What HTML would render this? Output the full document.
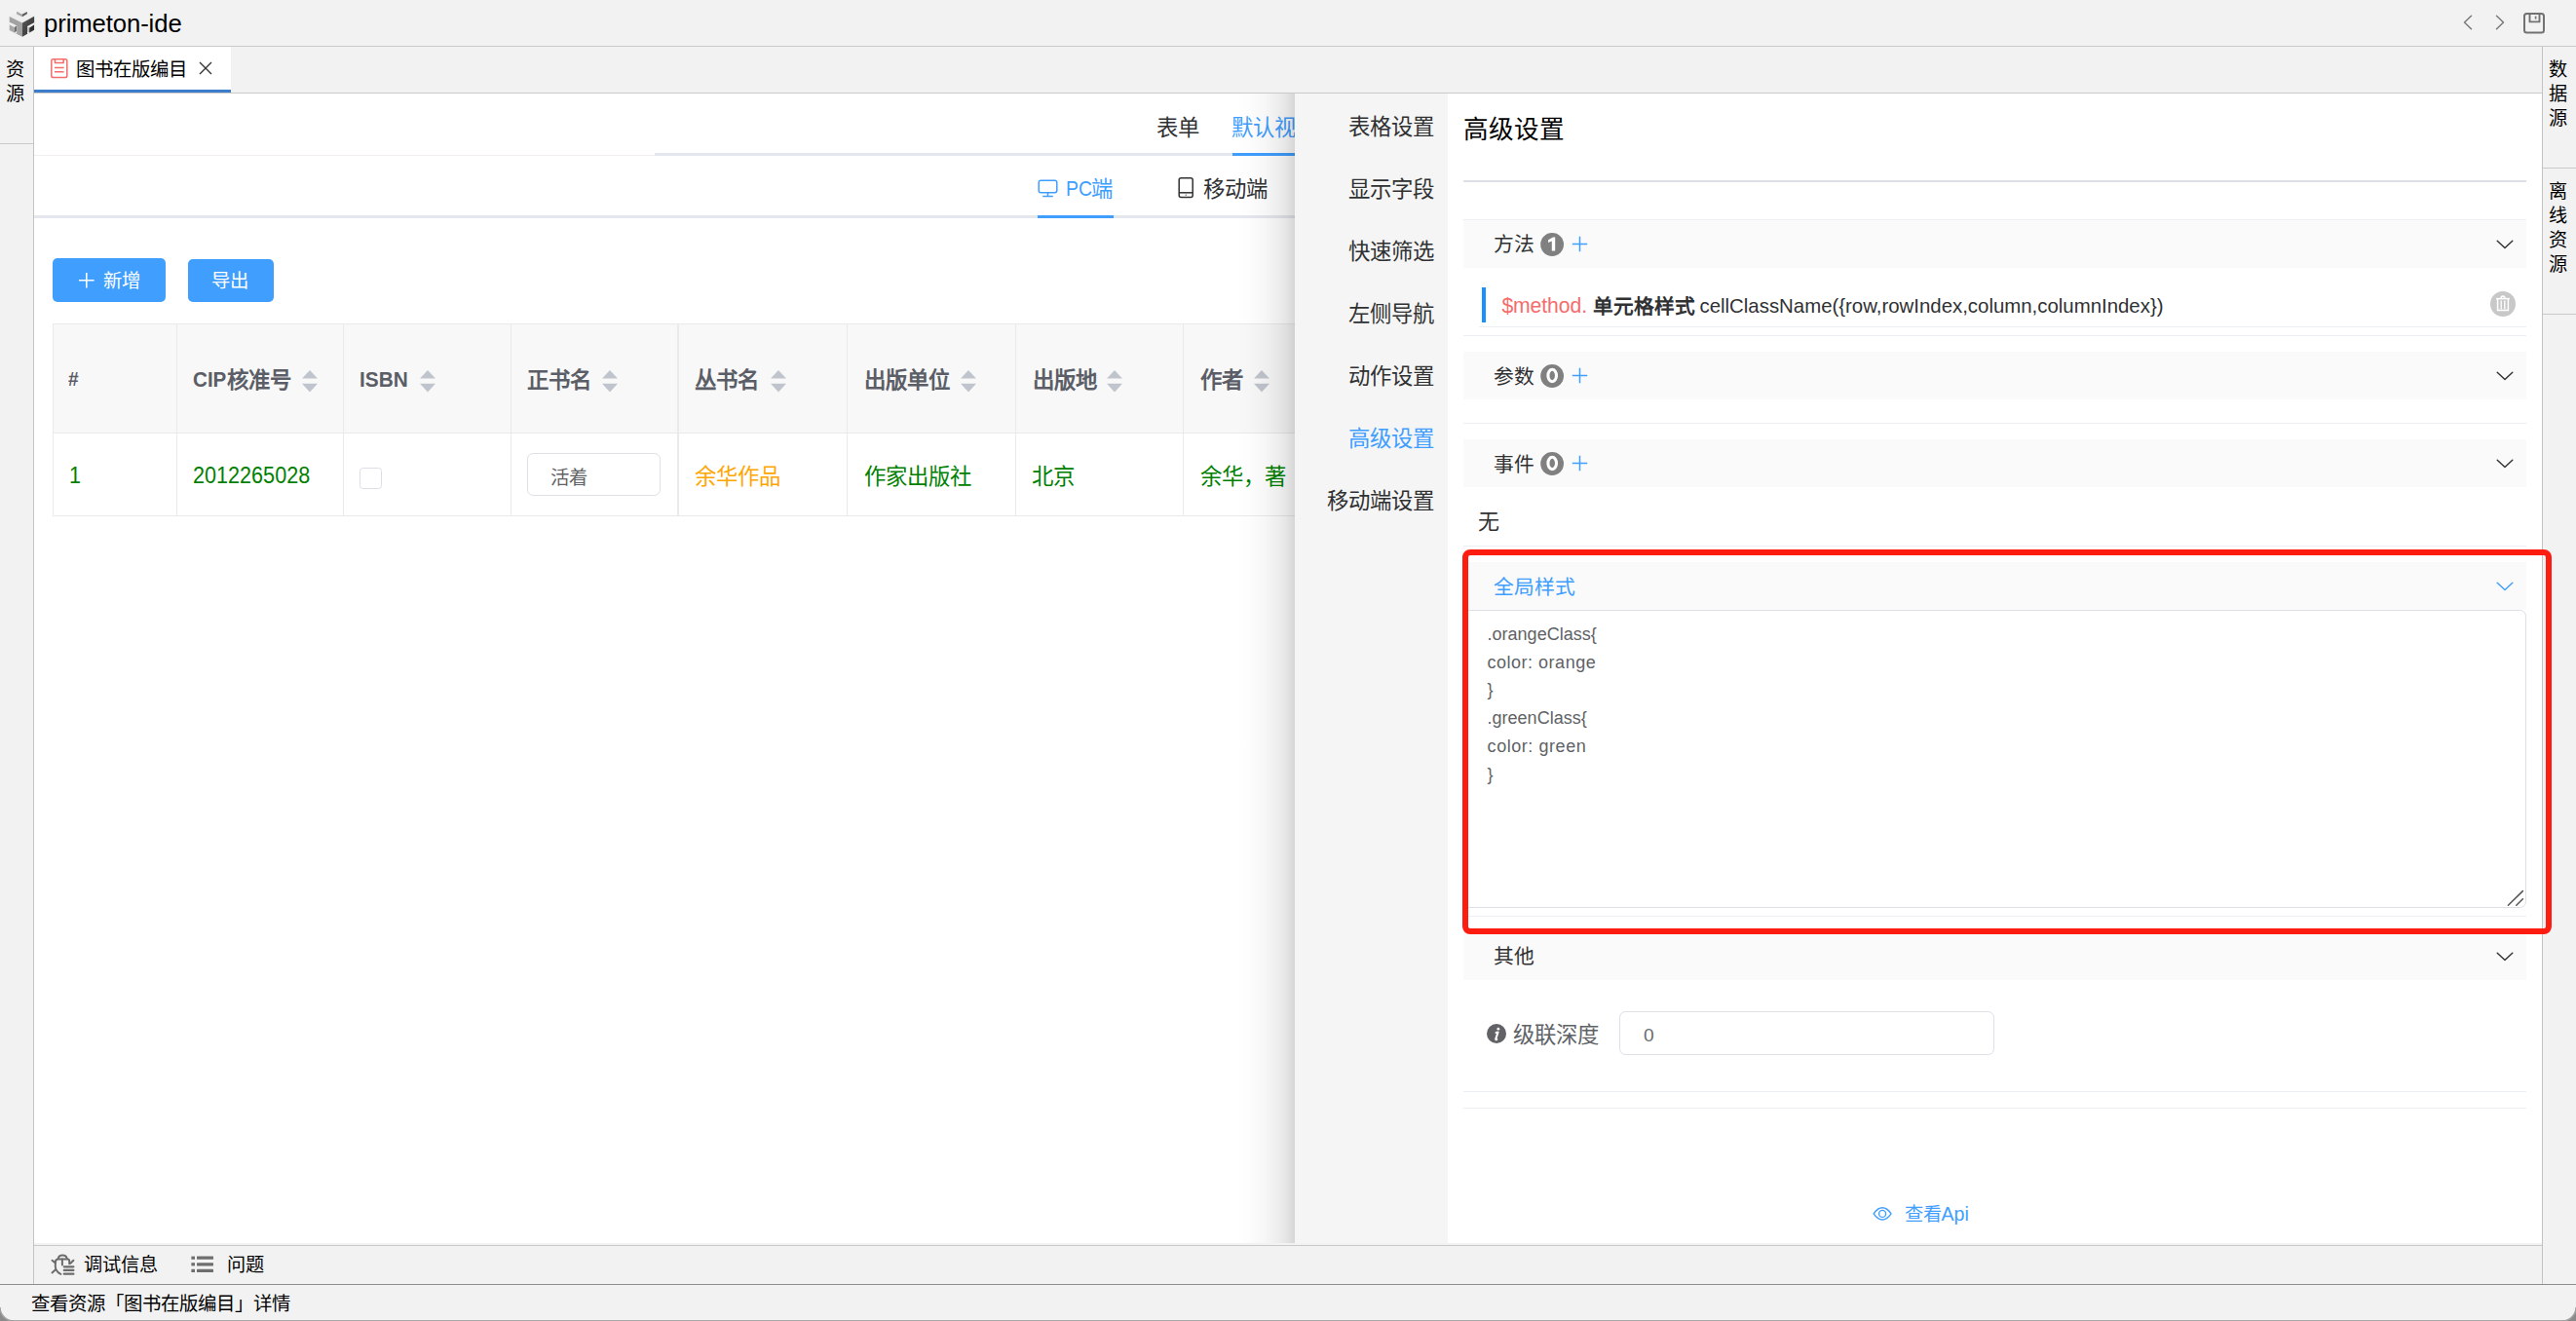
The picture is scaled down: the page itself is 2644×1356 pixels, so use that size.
<!DOCTYPE html>
<html lang="zh-CN">
<head>
<meta charset="utf-8">
<title>primeton-ide</title>
<style>
*{box-sizing:border-box;margin:0;padding:0}
html,body{width:2644px;height:1356px;overflow:hidden;background:#f2f2f2;font-family:"Liberation Sans",sans-serif;color:#000}
.a{position:absolute;white-space:nowrap}
.ln{position:absolute;background:#e6ebf5}
svg{position:absolute;overflow:visible}
/* ---------- frame ---------- */
#titlebar{left:0;top:0;width:2644px;height:47px;background:#f2f2f2}
#title{left:45px;top:6px;font-size:25.7px;line-height:36px;color:#000;letter-spacing:-0.1px}
#mainwhite{left:35px;top:96px;width:2574px;height:1182px;background:#fff}
#tab{left:35px;top:48px;width:202px;height:47px;background:#fff}
#tabul{left:35px;top:92px;width:202px;height:3.5px;background:#3b7dcb}
.side{font-size:19.2px;line-height:25px;color:#000;width:20px;white-space:normal;text-align:center}
.t19{font-size:19.2px;line-height:24px}
/* ---------- main content ---------- */
.tab22{font-size:22.4px;line-height:30px}
.btn{background:#409eff;border-radius:5px;color:#fff;font-size:19.2px;line-height:45px;text-align:center}
.th{font-size:22.4px;font-weight:bold;color:#5b5e66;line-height:30px}
.td{font-size:22.4px;line-height:30px}
.green{color:#008000}
.orange{color:#ffa500}
/* ---------- panel ---------- */
.nav{font-size:22.4px;line-height:30px;color:#303133;text-align:right;width:150px;left:1322px}
.hd{position:absolute;left:1502px;width:1091px;height:50px;background:#fafafa}
.hdt{font-size:20.8px;line-height:30px;color:#303133}
.badge{width:24px;height:24px;border-radius:12px;background:#808080;color:#fff;font-size:19px;line-height:24px;text-align:center;font-weight:bold}
.plus{color:#409eff}
.code{font-size:18px;line-height:28.8px;color:#606266}
</style>
</head>
<body>
<!-- ======= window frame ======= -->
<div class="a" id="titlebar"></div>
<div class="a" id="title">primeton-ide</div>
<div class="a" id="mainwhite"></div>
<div class="a" id="tab"></div>
<div class="a" id="tabul"></div>

<!-- frame lines -->
<div class="a" style="left:0;top:46.5px;width:2644px;height:1.5px;background:#c9c9c9"></div>
<div class="a" style="left:35px;top:95px;width:2574px;height:1.3px;background:#c9c9c9"></div>
<div class="a" style="left:34px;top:48px;width:1.3px;height:1270px;background:#c3c3c3"></div>
<div class="a" style="left:2609px;top:48px;width:1.3px;height:1270px;background:#c3c3c3"></div>
<div class="a" style="left:0;top:147px;width:34px;height:1.3px;background:#c9c9c9"></div>
<div class="a" style="left:2610px;top:172px;width:34px;height:1.3px;background:#c9c9c9"></div>
<div class="a" style="left:2610px;top:322px;width:34px;height:1.3px;background:#c9c9c9"></div>
<!-- sidebars text -->
<div class="a side" style="left:5px;top:59px">资源</div>
<div class="a side" style="left:2615px;top:59px">数据源</div>
<div class="a side" style="left:2615px;top:184px">离线资源</div>
<!-- logo -->
<svg style="left:8px;top:8px" width="30" height="32" viewBox="8 8 30 32">
  <defs><linearGradient id="lg1" x1="0" y1="0" x2="1" y2="1"><stop offset="0" stop-color="#5a5a5a"/><stop offset="1" stop-color="#2e2e2e"/></linearGradient></defs>
  <polygon points="9.7,17 22.3,9.4 35.1,16.8 22.9,23.5" fill="#eeeeee"/>
  <polygon points="9.7,17 22.9,23.5 22.9,37.8 9.7,31" fill="#a2a2a2"/>
  <polygon points="22.9,23.5 35.1,16.8 35.1,30.8 22.9,37.8" fill="url(#lg1)"/>
  <!-- top notch -->
  <polygon points="17.1,11.7 22.6,14.8 22.9,17.2 17.1,14.4" fill="#a6a6a6"/>
  <polygon points="22.6,14.8 27.9,11.9 27.9,14.3 22.9,17.2" fill="#5c5c5c"/>
  <!-- left cut -->
  <polygon points="9.4,22.6 17.2,26.4 17.2,34.6 9.4,31" fill="#f2f2f2"/>
  <polygon points="9.8,25.6 13.2,24.2 16.8,26.4 14.6,27.8" fill="#ededed"/>
  <polygon points="9.8,25.6 14.8,28 14.8,33.4 9.8,31" fill="#a8a8a8"/>
  <polygon points="14.8,28 17,26.6 17,32 14.8,33.4" fill="#707070"/>
  <!-- right cut -->
  <polygon points="28,27 35.4,23 35.4,30.8 28,35" fill="#f2f2f2"/>
  <polygon points="28.2,27.4 30.2,28.4 30.2,33.4 28.2,32.6" fill="#b8b8b8"/>
  <polygon points="30.2,28.4 35,25.6 35,30.8 30.2,33.4" fill="#303030"/>
</svg>
<!-- title right icons -->
<svg style="left:2526px;top:14px" width="50" height="20" viewBox="0 0 50 20" fill="none" stroke="#7a7a7a" stroke-width="1.5" stroke-linecap="round" stroke-linejoin="round">
  <polyline points="10.5,2.2 3.5,9 10.5,15.8"/>
  <polyline points="36.5,2.2 43.5,9 36.5,15.8"/>
</svg>
<svg style="left:2589px;top:12px" width="24" height="24" viewBox="0 0 24 24" fill="none" stroke="#727272" stroke-width="2" stroke-linejoin="round">
  <rect x="2" y="2" width="20" height="19.5" rx="2.5"/>
  <path d="M7.5 2.4v8h10v-8" stroke-width="1.9"/>
  <path d="M13.6 4.6v3" stroke-width="1.6"/>
</svg>
<!-- tab -->
<svg style="left:51px;top:59px" width="20" height="22" viewBox="0 0 20 22" fill="none" stroke="#f56c6c" stroke-width="1.5" stroke-linejoin="round">
  <path d="M5.4 1.8H3.6Q1.8 1.8 1.8 3.6v15.2q0 1.8 1.8 1.8h12.4q1.8 0 1.8-1.8V3.6q0-1.8-1.8-1.8h-1.8"/>
  <path d="M5.4 1.8h8.8v3.6H5.4z"/>
  <path d="M5 10.4h9.6M5 14.8h9.6"/>
</svg>
<div class="a t19" style="left:78px;top:58.4px;line-height:26px;font-size:19.4px;color:#000">图书在版编目</div>
<svg style="left:204px;top:63px" width="14" height="14" viewBox="0 0 14 14" fill="none" stroke="#333" stroke-width="1.4"><path d="M1 1l12 12M13 1L1 13"/></svg>
<!-- bottom bar -->
<div class="a" style="left:35px;top:1276px;width:2574px;height:2px;background:#f2f2f2"></div>
<div class="a" style="left:35px;top:1277.7px;width:2574px;height:1.5px;background:#c9c9c9"></div>
<div class="a" style="left:35px;top:1279px;width:2574px;height:39px;background:#f2f2f2"></div>
<svg style="left:52px;top:1287px" width="26" height="23" viewBox="0 0 26 23" fill="none" stroke="#6c6c6c" stroke-width="2" stroke-linecap="round" stroke-linejoin="round">
  <path d="M7.8 4.9C8.2 2.4 10.4 1.6 12.3 1.6C14.2 1.6 16.2 2.4 16.7 4.9"/>
  <path d="M19.2 10.2V7.4Q19.2 5.4 17.2 5.4H7.6Q5.2 5.4 5 8C4.6 11 4.6 14 5.5 16.2C6.6 18.6 8.4 20.2 10.4 20.9"/>
  <path d="M11.9 5.6V11.4"/>
  <path d="M1.5 6.8L4.8 9.4M1.5 19.4L5 16.2M23.4 6.8L20.4 9.8"/>
  <path d="M13.8 13.3H23.4M13.8 16.9H23.4M13.8 20.7H23.4" stroke-width="2.2"/>
</svg>
<div class="a t19" style="left:86px;top:1287.2px;color:#000">调试信息</div>
<svg style="left:196px;top:1289px" width="24" height="18" viewBox="0 0 24 18" fill="#6e6e6e">
  <rect x="0.4" y="0.6" width="3.6" height="3.2"/><rect x="6" y="0.6" width="17" height="3.2" rx="0.6"/>
  <rect x="0.4" y="7.2" width="3.6" height="3.2"/><rect x="6" y="7.2" width="17" height="3.2" rx="0.6"/>
  <rect x="0.4" y="13.8" width="3.6" height="3.2"/><rect x="6" y="13.8" width="17" height="3.2" rx="0.6"/>
</svg>
<div class="a t19" style="left:233px;top:1287px;color:#000">问题</div>
<!-- status bar -->
<div class="a" style="left:0;top:1317.5px;width:2644px;height:1.6px;background:#8e8e8e"></div>
<div class="a" style="left:0;top:1319px;width:2644px;height:37px;background:#f2f2f2"></div>
<div class="a t19" style="left:32px;top:1326.4px;color:#000;font-size:19.4px">查看资源「图书在版编目」详情</div>
<div class="a" style="left:0;top:1354.6px;width:2644px;height:1.4px;background:#a8a8a8"></div>
<svg style="left:0;top:1340px" width="16" height="16" viewBox="0 0 16 16"><path d="M0 0v16h14A14 14 0 0 1 0 2z" fill="#8a8a8a"/><path d="M0 2A14 14 0 0 0 14 16" fill="none" stroke="#a0a0a0" stroke-width="1.5"/></svg>
<svg style="left:2628px;top:1340px" width="16" height="16" viewBox="0 0 16 16"><path d="M16 0v16H2A14 14 0 0 0 16 2z" fill="#8a8a8a"/><path d="M16 2A14 14 0 0 1 2 16" fill="none" stroke="#a0a0a0" stroke-width="1.5"/></svg>

<!-- ======= main content ======= -->
<div class="a tab22" style="left:1187.4px;top:116.5px;color:#303133">表单</div>
<div class="a tab22" style="left:1264.4px;top:116.5px;color:#409eff">默认视图</div>
<div class="a" style="left:35px;top:158.6px;width:640px;height:1.2px;background:#f3eeee"></div>
<div class="a" style="left:672px;top:157px;width:700px;height:3.2px;background:#e4e7ed"></div>
<div class="a" style="left:1265px;top:157px;width:100px;height:3.2px;background:#409eff"></div>
<!-- row 2 -->
<div class="a" style="left:35px;top:220.8px;width:1400px;height:3.2px;background:#e4e7ed"></div>
<div class="a" style="left:1065px;top:220.8px;width:78px;height:3.2px;background:#409eff"></div>
<svg style="left:1064px;top:183px" width="23" height="20" viewBox="0 0 23 20" fill="none" stroke="#409eff" stroke-width="1.5" stroke-linejoin="round" stroke-linecap="round">
  <rect x="2.2" y="2.2" width="18.6" height="12.6" rx="2.2"/>
  <path d="M11.5 15v3.4M6.8 18.4h9.4"/>
</svg>
<div class="a tab22" style="left:1093.6px;top:178.6px;color:#409eff;font-size:22.6px;transform:scaleX(.86);transform-origin:0 50%">PC</div>
<div class="a tab22" style="left:1120.4px;top:179.8px;color:#409eff">端</div>
<svg style="left:1208px;top:181px" width="18" height="23" viewBox="0 0 18 23" fill="none" stroke="#303133" stroke-width="1.5" stroke-linejoin="round">
  <rect x="2.2" y="1.8" width="14" height="19.6" rx="2"/>
  <path d="M2.2 16.8h14"/>
  <circle cx="9.2" cy="19.1" r="0.7" fill="#303133" stroke="none"/>
</svg>
<div class="a tab22" style="left:1235.4px;top:179.6px;color:#303133">移动端</div>
<!-- buttons -->
<div class="a btn" style="left:54px;top:265px;width:116px;height:45px"></div>
<svg style="left:80px;top:279px" width="18" height="18" viewBox="0 0 18 18" stroke="#fff" stroke-width="1.6" fill="none"><path d="M8.8 1v15.6M1 8.8h15.6"/></svg>
<div class="a" style="left:106px;top:266px;font-size:19.4px;line-height:45px;color:#fff">新增</div>
<div class="a btn" style="left:193px;top:266px;width:88px;height:44px"></div>
<div class="a" style="left:217.4px;top:266px;font-size:19.4px;line-height:45px;color:#fff">导出</div>
<!-- table -->
<div class="a" style="left:54px;top:332px;width:1400px;height:113px;background:#f8f8f9"></div>
<div class="a" style="left:54px;top:331.6px;width:1400px;height:1.4px;background:#e8eaec"></div>
<div class="a" style="left:54px;top:444px;width:1400px;height:1.4px;background:#e8eaec"></div>
<div class="a" style="left:54px;top:528.8px;width:1400px;height:1.4px;background:#e8eaec"></div>
<div class="a" style="left:53.6px;top:332px;width:1.4px;height:198px;background:#e8eaec"></div>
<div class="a" style="left:181px;top:332px;width:1.4px;height:198px;background:#e8eaec"></div>
<div class="a" style="left:352px;top:332px;width:1.4px;height:198px;background:#e8eaec"></div>
<div class="a" style="left:524px;top:332px;width:1.4px;height:198px;background:#e8eaec"></div>
<div class="a" style="left:695.4px;top:332px;width:1.4px;height:198px;background:#e8eaec"></div>
<div class="a" style="left:869px;top:332px;width:1.4px;height:198px;background:#e8eaec"></div>
<div class="a" style="left:1042px;top:332px;width:1.4px;height:198px;background:#e8eaec"></div>
<div class="a" style="left:1214px;top:332px;width:1.4px;height:198px;background:#e8eaec"></div>
<!-- header labels -->
<div class="a th" style="left:69.6px;top:374px;font-size:20.6px;transform:scaleX(.93);transform-origin:0 50%">#</div>
<div class="a th" style="left:198.4px;top:374.7px;font-size:21.8px;transform:scaleX(.945);transform-origin:0 50%">CIP</div>
<div class="a th" style="left:233px;top:376.2px">核准号</div>
<div class="a th" style="left:369.4px;top:374.7px;font-size:21.8px;transform:scaleX(.955);transform-origin:0 50%">ISBN</div>
<div class="a th" style="left:541px;top:376.2px">正书名</div>
<div class="a th" style="left:713px;top:376.2px">丛书名</div>
<div class="a th" style="left:887px;top:376.2px">出版单位</div>
<div class="a th" style="left:1059.5px;top:376.2px">出版地</div>
<div class="a th" style="left:1232px;top:376.2px">作者</div>
<!-- sort carets -->
<svg style="left:310px;top:380px" width="16" height="23" fill="#c0c4cc"><path d="M0 8.6L8 0l8 8.6zM0 13.8h16L8 22.4z"/></svg>
<svg style="left:431px;top:380px" width="16" height="23" fill="#c0c4cc"><path d="M0 8.6L8 0l8 8.6zM0 13.8h16L8 22.4z"/></svg>
<svg style="left:618px;top:380px" width="16" height="23" fill="#c0c4cc"><path d="M0 8.6L8 0l8 8.6zM0 13.8h16L8 22.4z"/></svg>
<svg style="left:791px;top:380px" width="16" height="23" fill="#c0c4cc"><path d="M0 8.6L8 0l8 8.6zM0 13.8h16L8 22.4z"/></svg>
<svg style="left:986px;top:380px" width="16" height="23" fill="#c0c4cc"><path d="M0 8.6L8 0l8 8.6zM0 13.8h16L8 22.4z"/></svg>
<svg style="left:1136px;top:380px" width="16" height="23" fill="#c0c4cc"><path d="M0 8.6L8 0l8 8.6zM0 13.8h16L8 22.4z"/></svg>
<svg style="left:1287px;top:380px" width="16" height="23" fill="#c0c4cc"><path d="M0 8.6L8 0l8 8.6zM0 13.8h16L8 22.4z"/></svg>
<!-- data row -->
<div class="a td green" style="left:70.6px;top:473px;font-size:23.2px;transform:scaleX(.932);transform-origin:0 50%">1</div>
<div class="a td green" style="left:198.3px;top:473px;font-size:23.2px;transform:scaleX(.932);transform-origin:0 50%">2012265028</div>
<div class="a" style="left:369.2px;top:480.4px;width:22.8px;height:21.4px;border:1.5px solid #dcdfe6;border-radius:3.5px;background:#fff"></div>
<div class="a" style="left:541px;top:465.4px;width:137px;height:44px;border:1.5px solid #dcdfe6;border-radius:6.4px;background:#fff"></div>
<div class="a" style="left:564.6px;top:474.6px;font-size:19.4px;line-height:30px;color:#606266">活着</div>
<div class="a td orange" style="left:713.4px;top:474.6px">余华作品</div>
<div class="a td green" style="left:887.2px;top:474.6px">作家出版社</div>
<div class="a td green" style="left:1059px;top:474.6px">北京</div>
<div class="a td green" style="left:1232px;top:474.6px">余华，著</div>

<!-- ======= right settings panel ======= -->
<div class="a" style="left:1269px;top:96px;width:60px;height:1180px;background:linear-gradient(to right,rgba(0,0,0,0) 0%,rgba(0,0,0,.012) 25%,rgba(0,0,0,.035) 50%,rgba(0,0,0,.065) 70%,rgba(0,0,0,.10) 85%,rgba(0,0,0,.16) 100%)"></div>
<div class="a" style="left:1329px;top:96px;width:1280px;height:1180px;background:#fff"></div>
<div class="a" style="left:1329px;top:96px;width:157px;height:1180px;background:#f5f5f5"></div>
<!-- nav -->
<div class="a nav" style="top:116.1px">表格设置</div>
<div class="a nav" style="top:180.1px">显示字段</div>
<div class="a nav" style="top:243.9px">快速筛选</div>
<div class="a nav" style="top:307.8px">左侧导航</div>
<div class="a nav" style="top:371.7px">动作设置</div>
<div class="a nav" style="top:435.5px;color:#409eff">高级设置</div>
<div class="a nav" style="top:499.5px">移动端设置</div>
<!-- title -->
<div class="a" style="left:1502px;top:116.2px;font-size:25.6px;line-height:34px;color:#000">高级设置</div>
<div class="a" style="left:1502px;top:185px;width:1091px;height:2px;background:#dcdfe6"></div>
<!-- 方法 -->
<div class="hd" style="top:225px"></div>
<div class="a" style="left:1502px;top:224.6px;width:1091px;height:1.4px;background:#ebeef5"></div>
<div class="a hdt" style="left:1533.4px;top:236.2px">方法</div>
<svg style="left:1581px;top:239px" width="24" height="24" viewBox="0 0 24 24"><circle cx="12.1" cy="12" r="11.9" fill="#808080"/><path d="M15.2 4.4v14.2h-3.4V8.4l-3.7 1.7V7.2l4.9-2.8z" fill="#fff"/></svg>
<svg style="left:1613px;top:242px" width="17" height="17" fill="none" stroke="#409eff" stroke-width="1.5"><path d="M8.5 0.8v15.4M0.8 8.5h15.4"/></svg>
<svg class="chev" style="left:2562px;top:246px" width="18" height="10" fill="none" stroke="#303133" stroke-width="1.4" stroke-linecap="round" stroke-linejoin="round"><path d="M1.2 1.2L9 8.6l7.8-7.4"/></svg>
<!-- method row -->
<div class="a" style="left:1521px;top:295px;width:4px;height:35.5px;background:#1890ff"></div>
<div class="a" style="left:1541.4px;top:299.4px;font-size:21.2px;line-height:30px;color:#f56c6c;letter-spacing:-0.1px">$method.</div>
<div class="a" style="left:1634.6px;top:300px;font-size:20.7px;line-height:30px;color:#303133;font-weight:bold">单元格样式</div>
<div class="a" id="mname" style="left:1744.5px;top:299.2px;font-size:20.4px;line-height:30px;color:#303133">cellClassName({row,rowIndex,column,columnIndex})</div>
<svg style="left:2556px;top:298.5px" width="26" height="26" viewBox="0 0 26 26">
  <circle cx="13" cy="13" r="13" fill="#c8c8c8"/>
  <g fill="none" stroke="#fff" stroke-width="1.5">
    <path d="M6 7.6h14"/>
    <path d="M11 7.4q0-2.4 2-2.4t2 2.4"/>
    <path d="M7.6 8v11.6h10.8V8"/>
    <path d="M11.2 9.4v9M14.8 9.4v9" stroke-width="1.3"/>
  </g>
</svg>
<div class="a" style="left:1518px;top:334.6px;width:1075px;height:1.4px;background:#ebeef5"></div>
<div class="a" style="left:1502px;top:344px;width:1091px;height:1.4px;background:#ebeef5"></div>
<!-- 参数 -->
<div class="hd" style="top:360.6px;height:49.6px"></div>
<div class="a hdt" style="left:1533.4px;top:371.6px">参数</div>
<svg style="left:1581px;top:374.2px" width="24" height="24" viewBox="0 0 24 24"><circle cx="12.1" cy="12" r="11.9" fill="#808080"/><ellipse cx="12.2" cy="11.5" rx="4.3" ry="6.2" fill="none" stroke="#fff" stroke-width="3.1"/></svg>
<svg style="left:1613px;top:377px" width="17" height="17" fill="none" stroke="#409eff" stroke-width="1.5"><path d="M8.5 0.8v15.4M0.8 8.5h15.4"/></svg>
<svg style="left:2562px;top:380.6px" width="18" height="10" fill="none" stroke="#303133" stroke-width="1.4" stroke-linecap="round" stroke-linejoin="round"><path d="M1.2 1.2L9 8.6l7.8-7.4"/></svg>
<div class="a" style="left:1502px;top:433.8px;width:1091px;height:1.4px;background:#ebeef5"></div>
<!-- 事件 -->
<div class="hd" style="top:450.8px;height:49.6px"></div>
<div class="a hdt" style="left:1533.4px;top:461.6px">事件</div>
<svg style="left:1581px;top:464.4px" width="24" height="24" viewBox="0 0 24 24"><circle cx="12.1" cy="12" r="11.9" fill="#808080"/><ellipse cx="12.2" cy="11.5" rx="4.3" ry="6.2" fill="none" stroke="#fff" stroke-width="3.1"/></svg>
<svg style="left:1613px;top:467px" width="17" height="17" fill="none" stroke="#409eff" stroke-width="1.5"><path d="M8.5 0.8v15.4M0.8 8.5h15.4"/></svg>
<svg style="left:2562px;top:470.6px" width="18" height="10" fill="none" stroke="#303133" stroke-width="1.4" stroke-linecap="round" stroke-linejoin="round"><path d="M1.2 1.2L9 8.6l7.8-7.4"/></svg>
<div class="a" style="left:1517.4px;top:520.5px;font-size:22px;line-height:30px;color:#303133">无</div>
<div class="a" style="left:1502px;top:559.6px;width:1091px;height:1.4px;background:#ebeef5"></div>
<!-- 全局样式 -->
<div class="hd" style="top:576.8px;height:49.6px"></div>
<div class="a hdt" style="left:1533.4px;top:587.6px;color:#409eff">全局样式</div>
<svg style="left:2562px;top:596.6px" width="18" height="10" fill="none" stroke="#409eff" stroke-width="1.4" stroke-linecap="round" stroke-linejoin="round"><path d="M1.2 1.2L9 8.6l7.8-7.4"/></svg>
<div class="a" style="left:1502px;top:625.6px;width:1091px;height:306px;border:1.5px solid #dcdfe6;border-radius:6.4px;background:#fff"></div>
<div class="a code" style="left:1526.6px;top:636.8px;white-space:pre">.orangeClass{
<span style="letter-spacing:0.5px">color: orange</span>
}
.greenClass{
<span style="letter-spacing:0.55px">color: green</span>
}</div>
<svg style="left:2572px;top:912px" width="20" height="20" fill="none" stroke="#555" stroke-width="1.5" stroke-linecap="round"><path d="M2.4 17.2L17.4 2.6M10.8 17.2l6.6-6.4"/></svg>
<div class="a" style="left:1502px;top:939.6px;width:1091px;height:1.4px;background:#ebeef5"></div>
<!-- 其他 -->
<div class="hd" style="top:956.2px;height:49.6px"></div>
<div class="a hdt" style="left:1533.4px;top:967px">其他</div>
<svg style="left:2562px;top:977px" width="18" height="10" fill="none" stroke="#303133" stroke-width="1.4" stroke-linecap="round" stroke-linejoin="round"><path d="M1.2 1.2L9 8.6l7.8-7.4"/></svg>
<svg style="left:1525.9px;top:1051px" width="20" height="20" viewBox="0 0 19.2 19.2"><circle cx="9.6" cy="9.6" r="9.6" fill="#606266"/><circle cx="11.4" cy="5" r="1.35" fill="#fff"/><path d="M9.2 8.6l1.9-.4-2.2 6.6q-.3 1 .9.5" fill="none" stroke="#fff" stroke-width="2" stroke-linecap="round" stroke-linejoin="round"/></svg>
<div class="a" style="left:1553.4px;top:1048px;font-size:22.4px;line-height:30px;color:#606266">级联深度</div>
<div class="a" style="left:1662px;top:1038px;width:385px;height:44.8px;border:1.5px solid #dcdfe6;border-radius:6.4px;background:#fff"></div>
<div class="a" style="left:1687px;top:1048px;font-size:19.2px;line-height:30px;color:#6a6c70">0</div>
<div class="a" style="left:1502px;top:1119.8px;width:1091px;height:1.4px;background:#ebeef5"></div>
<div class="a" style="left:1502px;top:1136.8px;width:1091px;height:1.4px;background:#ebeef5"></div>
<!-- view api -->
<svg style="left:1921px;top:1238px" width="22" height="16" viewBox="0 0 22 16" fill="none" stroke="#409eff" stroke-width="1.4"><path d="M2.2 7.9Q6.2 1.8 11.1 1.8T20 7.9Q16 14 11.1 14T2.2 7.9z"/><circle cx="11.1" cy="7.9" r="3.5"/></svg>
<div class="a" style="left:1954.5px;top:1231px;font-size:19.2px;line-height:30px;color:#409eff">查看<span style="font-size:19.6px">Api</span></div>

<!-- red highlight annotation -->
<div class="a" style="left:1501.2px;top:564px;width:1117.4px;height:394.8px;border:6.6px solid #fd1c10;border-radius:8px"></div>

</body>
</html>
